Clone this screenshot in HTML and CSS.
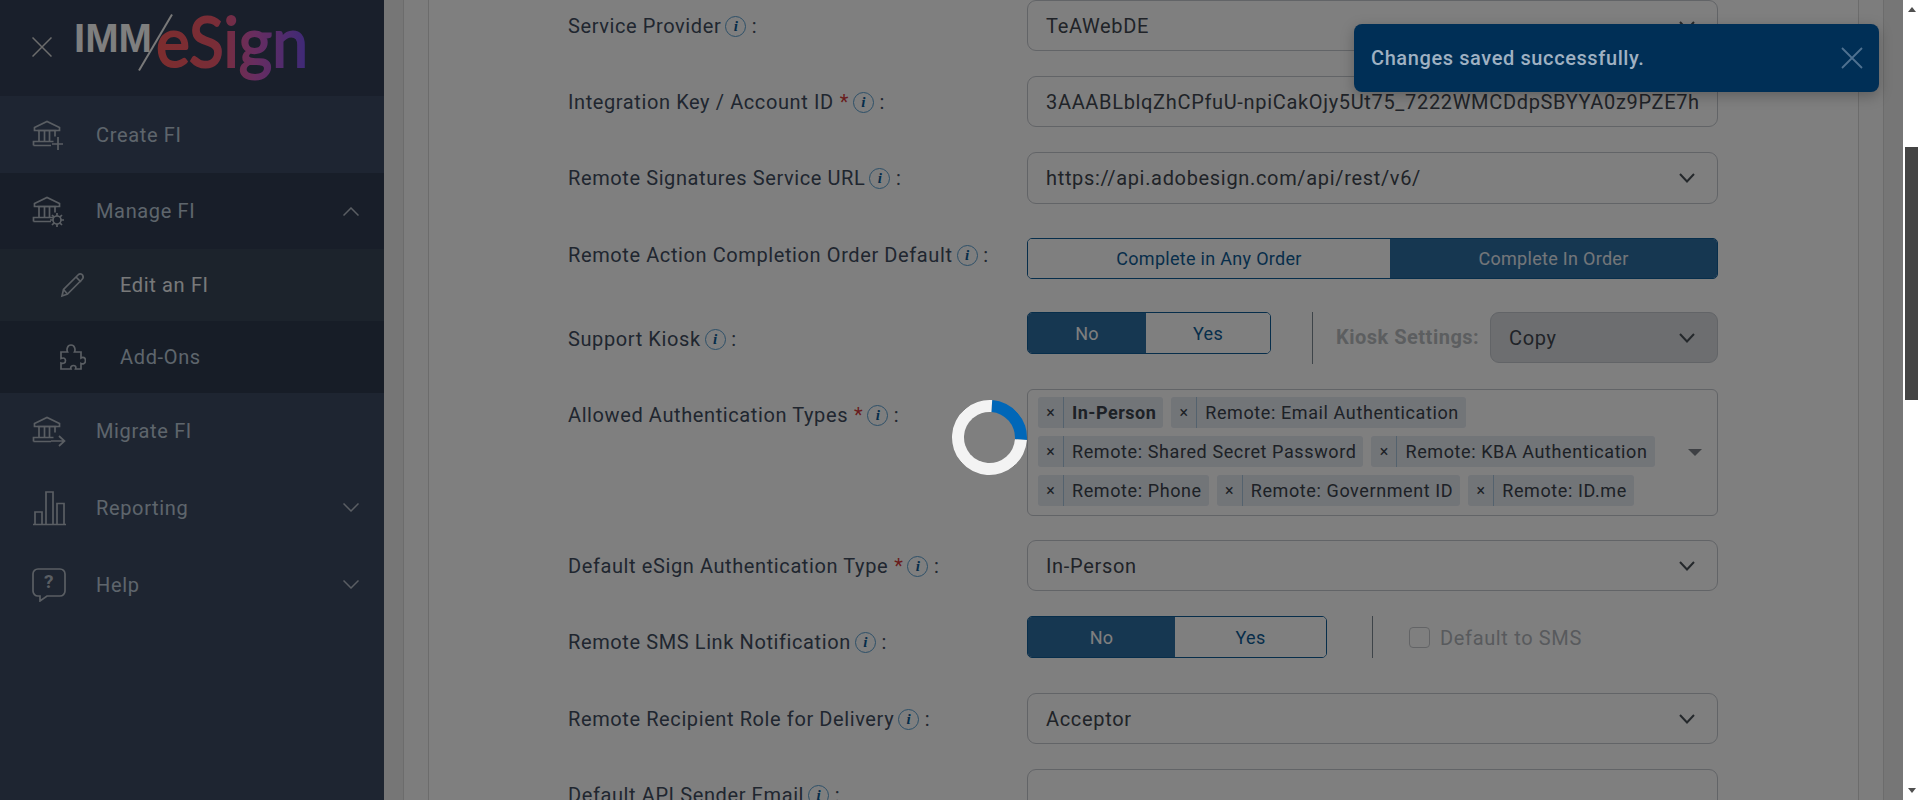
FILE: index.html
```html
<!DOCTYPE html>
<html lang="en">
<head>
<meta charset="utf-8">
<title>IMM eSign - Edit an FI</title>
<link rel="stylesheet" href="styles.css">
</head>
<body>
<svg class="defs" width="0" height="0" aria-hidden="true">
  <defs>
    <linearGradient id="esign" gradientUnits="userSpaceOnUse" x1="79" x2="231" y1="0" y2="0">
      <stop offset="0" stop-color="#fa5a5c"/>
      <stop offset="0.4" stop-color="#f25a70"/>
      <stop offset="0.65" stop-color="#d05ac0"/>
      <stop offset="1" stop-color="#7a54f0"/>
    </linearGradient>
    <g id="bank">
      <path d="M2.500 11.500V8.600L15 2.500l12.500 6.100v2.900z"/>
      <path d="M5.500 11.500h19M7 11.500v11M12.500 11.500v11M17.500 11.500v11M23 11.500v6"/>
      <path d="M4.500 22.500h17M1.500 26.500h17.500M1.500 26.500v-4h3"/>
    </g>
  </defs>
</svg>
<div class="app">
  <div class="viewport">
    <aside class="sidebar">
      <header class="brand">
        <svg class="x-icon" width="20" height="20" viewBox="0 0 20 20"><path d="M.5.500l19 19M19.500.500l-19 19"/></svg>
        <svg class="logo" width="240" height="72" viewBox="0 0 240 72">
          <text class="logo-imm" x="-3" y="40" textLength="78" lengthAdjust="spacingAndGlyphs">IMM</text>
          <path class="logo-slash" d="M95 2.500L62 58.500"/>
          <text class="logo-esign" x="79" y="55" textLength="152" lengthAdjust="spacingAndGlyphs" fill="url(#esign)" stroke="url(#esign)">eSign</text>
        </svg>
      </header>
      <nav class="nav">
        <a class="nav-item nav-create">
          <svg class="nav-icon" width="32" height="32" viewBox="0 0 32 32"><use href="#bank"/><path d="M26 18v13M20 25h11"/></svg>
          <span>Create FI</span>
        </a>
        <a class="nav-item nav-open">
          <svg class="nav-icon" width="32" height="32" viewBox="0 0 32 32"><use href="#bank"/><circle cx="25" cy="25" r="4"/><path d="M25 18v3M25 29v3M18 25h3M29 25h3M20 20l2.200 2.200M27.800 27.800L30 30M30 20l-2.200 2.200M22.200 27.800L20 30"/></svg>
          <span>Manage FI</span>
          <svg class="chev" width="16" height="9" viewBox="0 0 16 9"><path d="M.5 8.500L8 1l7.500 7.500"/></svg>
        </a>
        <a class="sub-item sub-active">
          <svg class="nav-icon" width="26" height="26" viewBox="0 0 26 26"><path d="M2 24l1.500-6.500L18 3c1.500-1.500 3.500-1.500 4.500 0s1 3-.5 4.500L7.500 22z"/><path d="M3.500 17.500l4 4.500M16 5l5 5"/></svg>
          <span>Edit an FI</span>
        </a>
        <a class="sub-item sub-dark">
          <svg class="nav-icon" width="26" height="26" viewBox="0 0 26 26"><path d="M1 8h6.500C6.500 6 7 1 11 1s4.500 5 3.500 7H21v6c2-1.300 4.500-.5 4.500 2.500S23 20.500 21 19.500V25h-5.500c1-2.500-.5-3.500-2-3.500s-3.500 1-2.500 3.500H1v-6c2.500 1 4.500 0 4.500-2.500S3.500 13.500 1 14.500z"/></svg>
          <span>Add-Ons</span>
        </a>
        <a class="nav-item nav-migrate">
          <svg class="nav-icon" width="36" height="32" viewBox="0 0 36 32"><use href="#bank"/><path d="M19 26h13M27 21l5.500 5-5.500 5"/></svg>
          <span>Migrate FI</span>
        </a>
        <a class="nav-item">
          <svg class="nav-icon" width="36" height="36" viewBox="0 0 36 36"><path d="M1 34.500h33M3 34.500V22h7v12.500M14 34.500V2h7v32.500M25 34.500V13.500h7v21"/></svg>
          <span>Reporting</span>
          <svg class="chev" width="16" height="9" viewBox="0 0 16 9"><path d="M.5.500L8 8l7.500-7.500"/></svg>
        </a>
        <a class="nav-item">
          <svg class="nav-icon" width="34" height="34" viewBox="0 0 34 34"><path d="M6 1h22a5 5 0 0 1 5 5v17a5 5 0 0 1-5 5H15l-7 5v-5H6a5 5 0 0 1-5-5V6a5 5 0 0 1 5-5z"/><text class="help-mark" x="17" y="20" text-anchor="middle">?</text></svg>
          <span>Help</span>
          <svg class="chev" width="16" height="9" viewBox="0 0 16 9"><path d="M.5.500L8 8l7.500-7.500"/></svg>
        </a>
      </nav>
    </aside>

    <main class="content">
      <section class="panel">
        <div class="inner-panel">
          <form class="form">
            <div class="row">
              <div class="label">Service Provider<i class="info">i</i> :</div>
              <div class="select"><span>TeAWebDE</span><svg class="caret" width="16" height="10" viewBox="0 0 16 10"><path d="M1 1l7 7.500L15 1"/></svg></div>
            </div>
            <div class="row">
              <div class="label">Integration Key / Account ID<b class="req">*</b><i class="info">i</i> :</div>
              <div class="select"><span class="clip">3AAABLblqZhCPfuU-npiCakOjy5Ut75_7222WMCDdpSBYYA0z9PZE7h</span></div>
            </div>
            <div class="row row-77">
              <div class="label">Remote Signatures Service URL<i class="info">i</i> :</div>
              <div class="select select-52"><span>https://api.adobesign.com/api/rest/v6/</span><svg class="caret" width="16" height="10" viewBox="0 0 16 10"><path d="M1 1l7 7.500L15 1"/></svg></div>
            </div>
            <div class="row row-83">
              <div class="label">Remote Action Completion Order Default<i class="info">i</i> :</div>
              <div class="segment segment-wide">
                <span class="seg seg-a">Complete in Any Order</span>
                <span class="seg seg-on seg-b">Complete In Order</span>
              </div>
            </div>
            <div class="row row-77">
              <div class="label label-kiosk">Support Kiosk<i class="info">i</i> :</div>
              <div class="control-line">
                <div class="segment segment-kiosk">
                  <span class="seg seg-on seg-no">No</span>
                  <span class="seg seg-yes">Yes</span>
                </div>
                <span class="divider divider-tall"></span>
                <span class="kiosk-label">Kiosk Settings:</span>
                <div class="select select-off"><span>Copy</span><svg class="caret" width="16" height="10" viewBox="0 0 16 10"><path d="M1 1l7 7.500L15 1"/></svg></div>
              </div>
            </div>
            <div class="row row-151">
              <div class="label">Allowed Authentication Types<b class="req">*</b><i class="info">i</i> :</div>
              <div class="multi">
                <div class="chips">
                  <div class="chip-line">
                    <span class="chip"><i class="chip-x">×</i><span class="chip-text chip-bold">In-Person</span></span>
                    <span class="chip"><i class="chip-x">×</i><span class="chip-text">Remote: Email Authentication</span></span>
                  </div>
                  <div class="chip-line">
                    <span class="chip"><i class="chip-x">×</i><span class="chip-text">Remote: Shared Secret Password</span></span>
                    <span class="chip"><i class="chip-x">×</i><span class="chip-text">Remote: KBA Authentication</span></span>
                  </div>
                  <div class="chip-line">
                    <span class="chip"><i class="chip-x">×</i><span class="chip-text">Remote: Phone</span></span>
                    <span class="chip"><i class="chip-x">×</i><span class="chip-text">Remote: Government ID</span></span>
                    <span class="chip"><i class="chip-x">×</i><span class="chip-text">Remote: ID.me</span></span>
                  </div>
                </div>
                <span class="multi-caret"></span>
              </div>
            </div>
            <div class="row">
              <div class="label">Default eSign Authentication Type<b class="req">*</b><i class="info">i</i> :</div>
              <div class="select"><span>In-Person</span><svg class="caret" width="16" height="10" viewBox="0 0 16 10"><path d="M1 1l7 7.500L15 1"/></svg></div>
            </div>
            <div class="row row-77">
              <div class="label">Remote SMS Link Notification<i class="info">i</i> :</div>
              <div class="control-line">
                <div class="segment segment-sms">
                  <span class="seg seg-on seg-sms-no">No</span>
                  <span class="seg seg-sms-yes">Yes</span>
                </div>
                <span class="divider divider-sms"></span>
                <span class="check"></span>
                <span class="check-label">Default to SMS</span>
              </div>
            </div>
            <div class="row">
              <div class="label">Remote Recipient Role for Delivery<i class="info">i</i> :</div>
              <div class="select"><span>Acceptor</span><svg class="caret" width="16" height="10" viewBox="0 0 16 10"><path d="M1 1l7 7.500L15 1"/></svg></div>
            </div>
            <div class="row">
              <div class="label">Default API Sender Email<i class="info">i</i> :</div>
              <div class="select"></div>
            </div>
          </form>
        </div>
      </section>
    </main>

    <div class="overlay"></div>
    <div class="spinner"></div>
    <div class="toast">
      <span>Changes saved successfully.</span>
      <svg class="toast-x" width="22" height="22" viewBox="0 0 22 22"><path d="M1 1l20 20M21 1L1 21"/></svg>
    </div>
  </div>
  <div class="scrollbar">
    <span class="arrow arrow-up"></span>
    <span class="track"><span class="thumb"></span></span>
    <span class="arrow arrow-down"></span>
  </div>
</div>
</body>
</html>
```
FILE: styles.css
```css
* { box-sizing: border-box; }
html, body { margin: 0; height: 100%; }
body { overflow: hidden; font-family: Roboto, "Liberation Sans", sans-serif; background: #fff; color: #414d5f; }
.defs { position: absolute; }

.app { display: flex; height: 800px; width: 1920px; }
.viewport { position: relative; flex: 1; display: flex; height: 800px; overflow: hidden; background: #ededed; }

/* Sidebar */
.sidebar { width: 384px; flex: none; background: #3c4a62; display: flex; flex-direction: column; }
.brand { height: 96px; background: #323e56; display: flex; align-items: flex-start; padding: 37px 0 0 32px; }
.x-icon { fill: none; stroke: #d8d8d8; stroke-width: 1.5; }
.logo { margin: -25px 0 0 25px; overflow: visible; }
.logo-imm { font: 700 40px "Liberation Sans", sans-serif; fill: #fff; }
.logo-slash { stroke: #f2f2f2; stroke-width: 2; fill: none; }
.logo-esign { font: 400 69px Lato, sans-serif; stroke-width: 2; }

.nav { display: flex; flex-direction: column; }
.nav-item, .sub-item { display: flex; align-items: center; font-size: 20px; letter-spacing: .65px; color: #bccbd9; position: relative; }
.nav-item { height: 77px; padding-left: 32px; }
.nav-item > span { position: absolute; left: 96px; }
.nav-create { background: #3c4a64; }
.nav-open { background: #303c52; height: 76px; }
.nav-migrate { height: 76px; }
.sub-item { height: 72px; padding-left: 60px; }
.sub-item > span { position: absolute; left: 120px; }
.sub-active { background: #384658; color: #f0f2f5; }
.sub-dark { background: #2e3a4e; }
.nav-icon { fill: none; stroke: #b4bcc6; stroke-width: 1.700; }
.help-mark { font: 700 19px Roboto, sans-serif; fill: #b4bcc6; stroke: none; }
.chev { position: absolute; left: 343px; fill: none; stroke: #b4bcc6; stroke-width: 1.500; }

/* Main */
.content { flex: 1; padding: 0 19px; min-width: 0; }
.panel { height: 100%; padding: 0 24px; background: #fbfbfb; border-left: 1px solid #d8d8d8; border-right: 1px solid #d8d8d8; }
.inner-panel { height: 100%; background: #fff; border-left: 1px solid #d8d8d8; border-right: 1px solid #d8d8d8; padding: 0 0 0 139px; }
.form { display: flex; flex-direction: column; }
.row { display: flex; height: 76px; flex: none; }
.row-77 { height: 77px; }
.row-83 { height: 83px; }
.row-151 { height: 151px; }
.label { width: 459px; flex: none; font-size: 20px; line-height: 27px; padding-top: 13px; letter-spacing: .6px; white-space: nowrap; }
.label-kiosk { padding-top: 14px; }
.info { display: inline-block; width: 21px; height: 21px; margin: 0 0 0 4px; border: 1px solid #5a9fd0; border-radius: 50%; color: #0b5a95; font: italic 700 15px/19px "Liberation Serif", serif; text-align: center; vertical-align: 2px; letter-spacing: 0; }
.req { color: #d33a3a; font-weight: 400; margin-left: 6px; }

.select { width: 691px; height: 51px; border: 1px solid #c4c8ce; border-radius: 9px; display: flex; align-items: center; justify-content: space-between; padding: 0 22px 0 18px; font-size: 20px; letter-spacing: .67px; background: #fff; color: #414750; flex: none; }
.select-52 { height: 52px; }
.select .clip { white-space: nowrap; overflow: hidden; width: 654px; flex: none; }
.caret { fill: none; stroke: #495057; stroke-width: 2; flex: none; }

.segment { display: flex; height: 42px; border: 1px solid #0f5c96; border-radius: 5px; overflow: hidden; font-size: 18px; letter-spacing: .3px; flex: none; }
.segment-wide { width: 691px; margin-top: 9px; height: 41px; }
.seg { display: flex; align-items: center; justify-content: center; color: #0f5c96; background: #fff; }
.seg-on { background: #2d6ea3; color: #fff; }
.seg-a { width: 362px; }
.seg-b { flex: 1; color: #e6edf3; }
.control-line { display: flex; align-items: flex-start; }
.segment-kiosk { width: 244px; }
.seg-no { width: 118px; }
.seg-yes { flex: 1; }
.segment-sms { width: 300px; }
.seg-sms-no { width: 147px; }
.seg-sms-yes { flex: 1; }
.divider { width: 1px; height: 52px; background: #7d8892; flex: none; }
.divider-tall { margin: 0 23px 0 41px; }
.divider-sms { margin: 0 36px 0 45px; height: 42px; }
.kiosk-label { font-size: 20px; font-weight: 700; letter-spacing: .5px; color: #b9bcc0; line-height: 27px; padding-top: 12px; width: 154px; flex: none; white-space: nowrap; }
.select-off { width: 228px; background: #dadce0; }
.check { width: 21px; height: 21px; margin-top: 11px; border: 1px solid #c6c9cd; border-radius: 4px; background: #fff; flex: none; }
.check-label { font-size: 20px; color: #b1b5ba; margin-left: 10px; line-height: 27px; padding-top: 9px; letter-spacing: .65px; white-space: nowrap; }

.multi { width: 691px; height: 127px; border: 1px solid #c4c8ce; border-radius: 6px; padding: 7px 10px; display: flex; background: #fff; position: relative; flex: none; }
.chips { display: flex; flex-direction: column; gap: 8px; }
.chip-line { display: flex; gap: 8px; }
.chip { display: flex; height: 31px; background: #e4eaf1; border-radius: 3px; font-size: 18px; letter-spacing: .6px; color: #3b424c; align-items: stretch; }
.chip-x { width: 26px; font-style: normal; font-size: 16px; display: flex; align-items: center; justify-content: center; border-right: 1px solid #a9c4dc; flex: none; letter-spacing: 0; }
.chip-text { padding: 0 7px 0 8px; display: flex; align-items: center; white-space: nowrap; }
.chip-bold { font-weight: 700; letter-spacing: .5px; }
.multi-caret { position: absolute; right: 15px; top: 59px; border-top: 7px solid #7d8188; border-left: 7px solid transparent; border-right: 7px solid transparent; }

/* Overlay layer */
.overlay { position: absolute; inset: 0; background: rgba(0, 0, 0, .5); }
.spinner { position: absolute; left: 952px; top: 400px; width: 75px; height: 75px; border: 12px solid #f3f3f3; border-top-color: #0067b8; border-radius: 50%; transform: rotate(49deg); }
.toast { position: absolute; left: 1354px; top: 24px; width: 525px; height: 68px; background: #002f56; border-radius: 8px; display: flex; align-items: center; justify-content: space-between; padding: 0 16px 0 17px; font-size: 20px; font-weight: 500; letter-spacing: .6px; color: #9fb1c2; box-shadow: 0 4px 14px rgba(0, 0, 0, .25); }
.toast-x { fill: none; stroke: #4f7190; stroke-width: 1.800; }

/* Scrollbar */
.scrollbar { width: 17px; flex: none; display: flex; flex-direction: column; align-items: center; justify-content: space-between; background: #fff; height: 800px; position: relative; }
.arrow { width: 0; height: 0; border-left: 4px solid transparent; border-right: 4px solid transparent; flex: none; margin: 7px 0; }
.arrow-up { border-bottom: 5px solid #505050; }
.arrow-down { border-top: 5px solid #505050; }
.track { position: absolute; top: 0; left: 2px; right: 2px; bottom: 0; }
.thumb { display: block; margin-top: 147px; height: 253px; background: #444; }
```
